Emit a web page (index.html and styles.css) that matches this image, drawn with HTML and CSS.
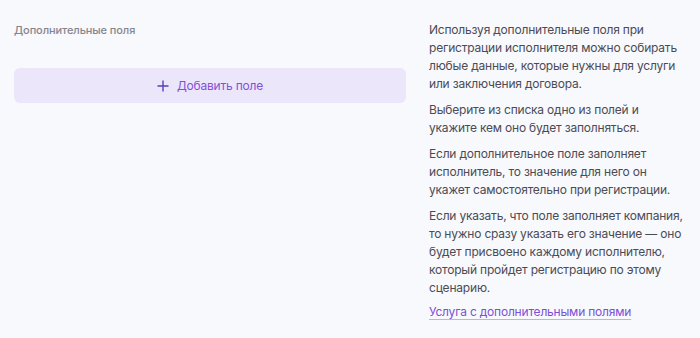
FILE: index.html
```html
<!DOCTYPE html>
<html lang="ru">
<head>
  <meta charset="UTF-8" />
  <title>Дополнительные поля</title>
  <link rel="stylesheet" href="styles.css">
</head>
<body>
  <div class="layout">
    <div class="fields">
      <div class="fields-title">Дополнительные поля</div>
      <button class="add-btn">
        <svg width="12" height="12" viewBox="0 0 12 12"><path d="M6 0.5v11M0.5 6h11" stroke="#5b3fb8" stroke-width="1.4" fill="none"/></svg>
        Добавить поле
      </button>
    </div>
    <div class="hint">
      <p>Используя дополнительные поля при регистрации исполнителя можно собирать любые данные, которые нужны для услуги или заключения договора.</p>
      <p>Выберите из списка одно из полей и<br>укажите кем оно будет заполняться.</p>
      <p>Если дополнительное поле заполняет исполнитель, то значение для него он укажет самостоятельно при регистрации.</p>
      <p>Если указать, что поле заполняет компания, то нужно сразу указать его значение — оно будет присвоено каждому исполнителю, который пройдет регистрацию по этому сценарию.</p>
      <a class="hint-link" href="#">Услуга с дополнительными полями</a>
    </div>
  </div>
</body>
</html>
```

FILE: styles.css
```css
* { box-sizing: border-box; margin: 0; padding: 0; }
body {
  font-family: Inter, 'Noto Sans', sans-serif;
  background: #f8f9fc;
  color: #4b4b55;
  padding: 21px 10px 0 14px;
}
.layout { display: grid; grid-template-columns: 392px 1fr; gap: 23px; }
.fields-title { font-size: 11px; font-weight: 500; color: #85858f; line-height: 18px; margin-bottom: 29px; letter-spacing: -0.1px; }
.add-btn {
  width: 100%; height: 35px;
  display: flex; align-items: center; justify-content: center; gap: 8px;
  background: #ebe6fa; border: none; border-radius: 6px;
  font-family: inherit; font-size: 12px; color: #8450d8; letter-spacing: -0.2px;
  cursor: pointer;
}
.hint { font-size: 12px; line-height: 18px; letter-spacing: -0.2px; }
.hint p { margin-bottom: 8px; }
.hint p:last-of-type { margin-bottom: 6px; }
.hint-link {
  display: block;
  color: #7b4fd6;
  text-decoration: underline; text-decoration-color: #c2aef0;
  text-underline-offset: 3px;
}
```
